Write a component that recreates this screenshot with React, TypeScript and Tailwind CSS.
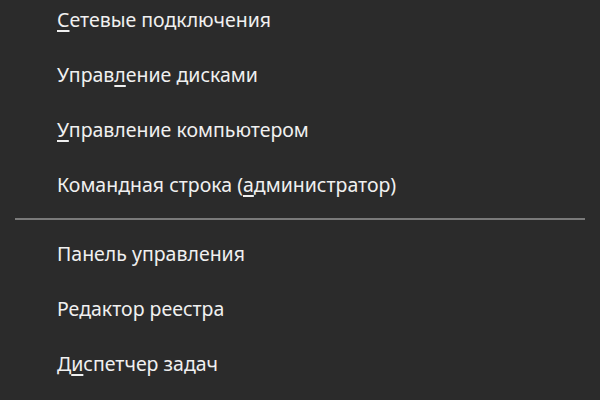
import React from "react";

type Item = { pre: string; key: string; post: string };

const group1: Item[] = [
  { pre: "", key: "С", post: "етевые подключения" },
  { pre: "Управ", key: "л", post: "ение дисками" },
  { pre: "", key: "У", post: "правление компьютером" },
  { pre: "Командная строка (", key: "а", post: "дминистратор)" },
];

const group2: Item[] = [
  { pre: "Панель управления", key: "", post: "" },
  { pre: "Редактор реестра", key: "", post: "" },
  { pre: "Д", key: "и", post: "спетчер задач" },
];

function Row({ item }: { item: Item }) {
  return (
    <div className="flex h-[55px] items-center pl-[57px] text-[19.5px] text-[#f0f0f0]">
      <span className="whitespace-pre">
        {item.pre}
        {item.key && (
          <span className="underline decoration-[1.5px] underline-offset-[3px]">{item.key}</span>
        )}
        {item.post}
      </span>
    </div>
  );
}

export default function App() {
  return (
    <div
      className="h-[400px] w-[600px] overflow-hidden bg-[#2b2b2b]"
      style={{ fontFamily: '"Noto Sans", "Open Sans", sans-serif' }}
    >
      <div className="-mt-[8px] flex flex-col">
        {group1.map((it, i) => (
          <Row key={i} item={it} />
        ))}
        <div className="py-[6px]">
          <div className="mx-[15px] h-[2px] bg-[#7a7a7a]" />
        </div>
        {group2.map((it, i) => (
          <Row key={i} item={it} />
        ))}
      </div>
    </div>
  );
}
